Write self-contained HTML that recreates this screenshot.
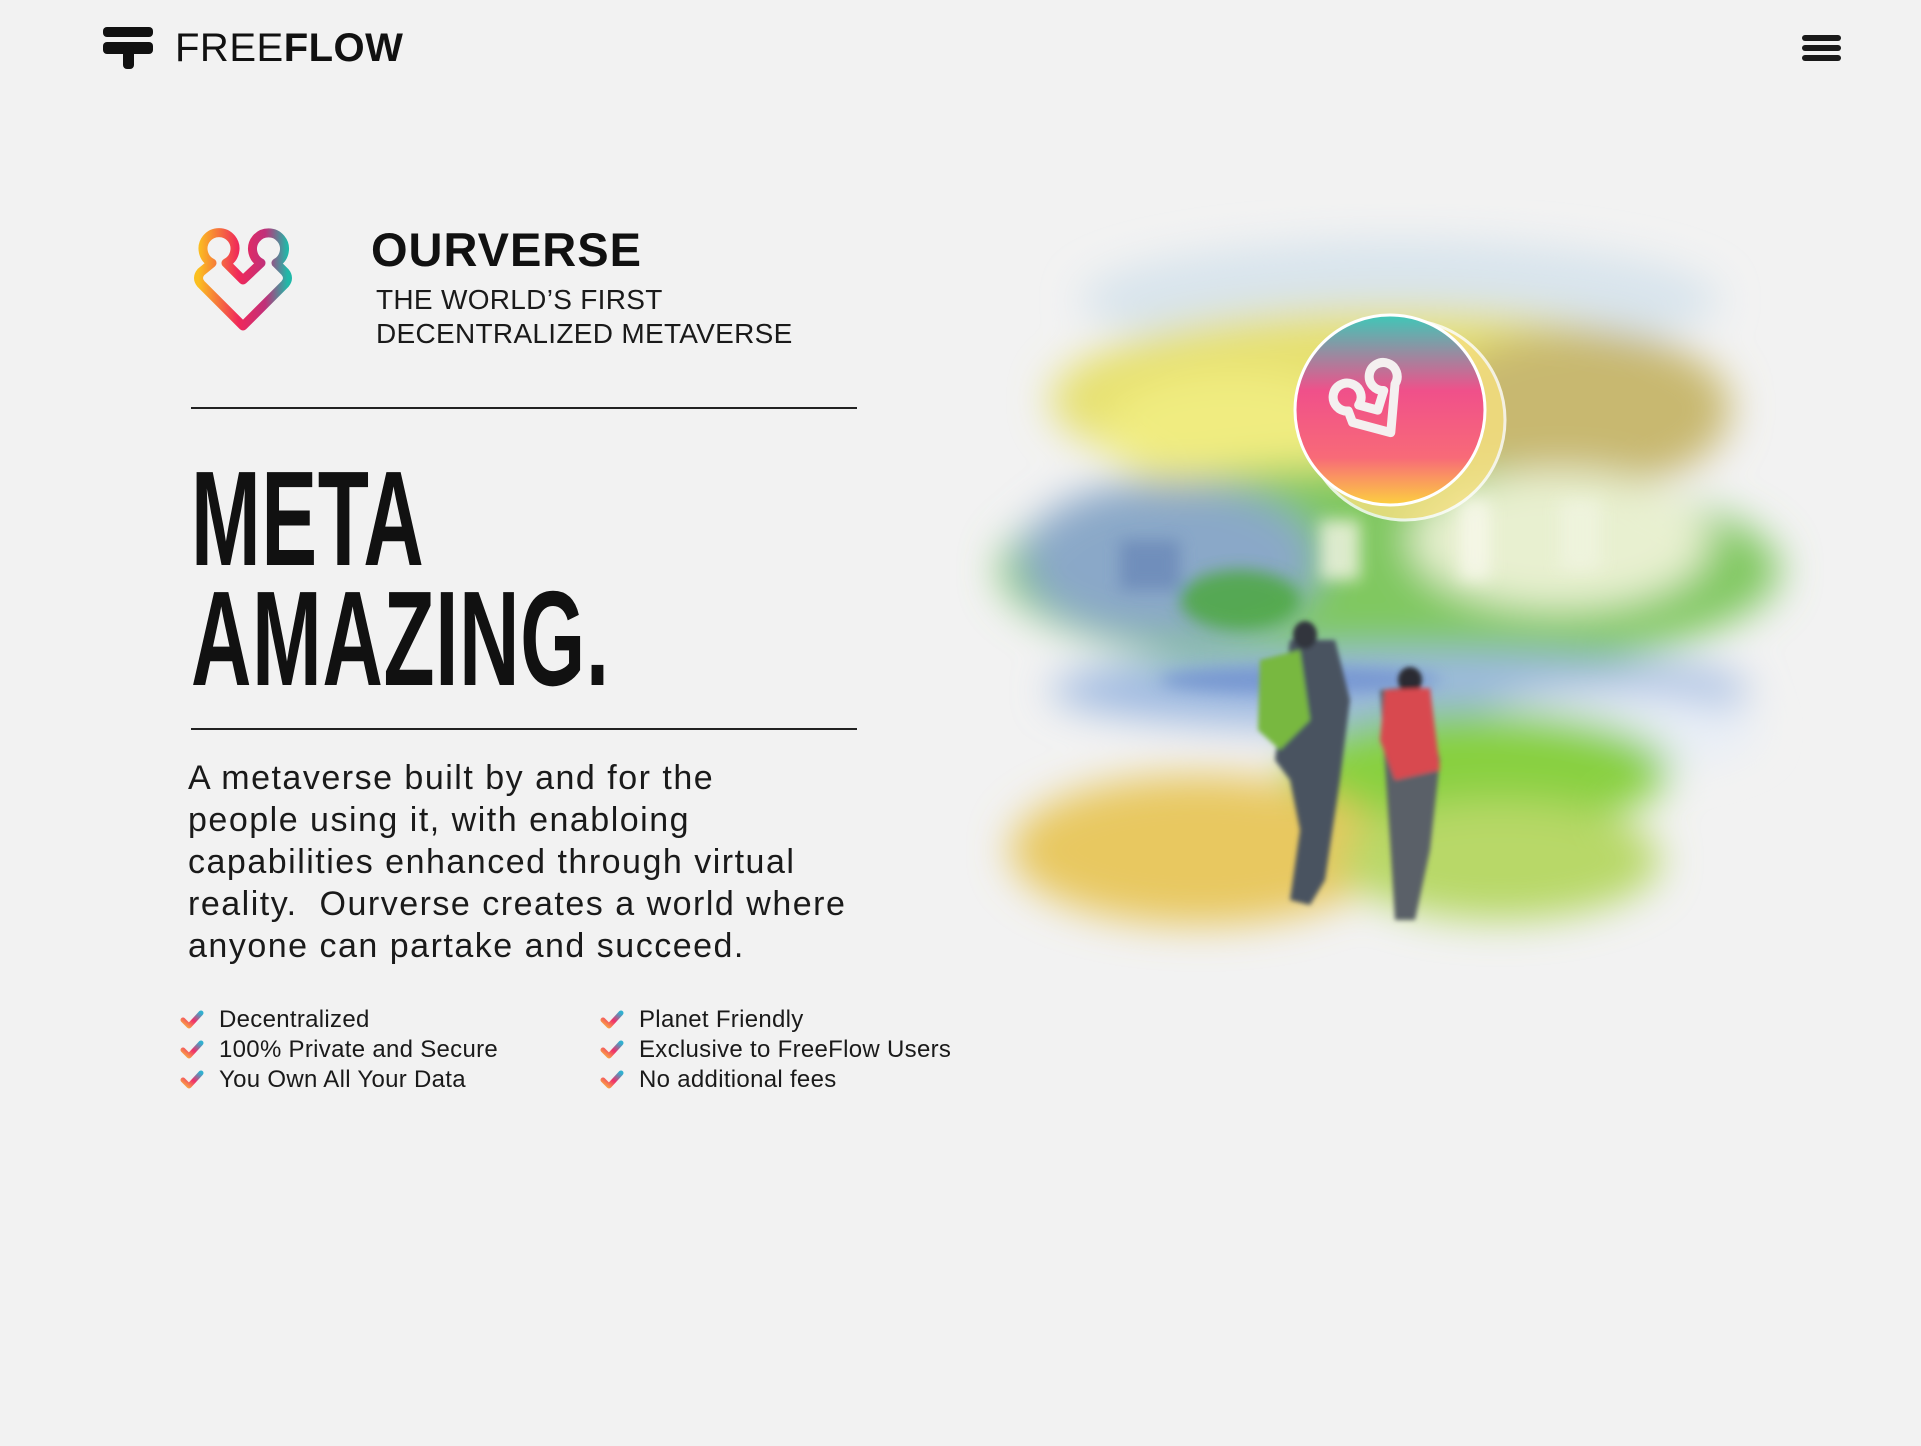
<!DOCTYPE html>
<html><head><meta charset="utf-8"><style>
*{margin:0;padding:0;box-sizing:border-box}
body{width:1921px;height:1446px;background:#f2f2f2;position:relative;overflow:hidden;font-family:"Liberation Sans",sans-serif;color:#111}
.abs{position:absolute}
.brand{left:175px;top:26px;font-size:40px;letter-spacing:.5px;color:#111;white-space:nowrap}
.brand b{font-weight:900}
.ham{left:1802px;width:39px;height:6px;background:#1a1a1a;border-radius:3px}
.ov{left:371px;top:222px;font-size:47px;font-weight:bold;letter-spacing:1px}
.sub{left:376px;font-size:28px;letter-spacing:.3px;white-space:nowrap;color:#1a1a1a}
.line{left:191px;width:666px;height:2px;background:#222}
.big{left:191px;font-family:"Liberation Sans Narrow","Liberation Sans",sans-serif;font-weight:bold;font-size:135px;line-height:1;transform-origin:0 0;transform:scaleX(.62);letter-spacing:1px;white-space:nowrap}
.para{left:188px;top:757px;width:760px;font-size:34px;line-height:42px;color:#1a1a1a;letter-spacing:1.5px;white-space:nowrap}
.li{font-size:24px;color:#1a1a1a;white-space:nowrap;letter-spacing:.3px}
.ck{width:24px;height:20px}
</style></head><body>
<svg class="abs" style="left:102px;top:26px" width="52" height="44" viewBox="0 0 52 44">
<rect x="1" y="1" width="50" height="10" rx="4" fill="#111"/>
<rect x="1" y="16" width="50" height="12" rx="4" fill="#111"/>
<rect x="21" y="20" width="11" height="23" rx="4" fill="#111"/>
</svg>
<div class="abs brand">FREE<b>FLOW</b></div>
<div class="abs ham" style="top:35px"></div>
<div class="abs ham" style="top:45px"></div>
<div class="abs ham" style="top:55px"></div>

<svg class="abs" style="left:186px;top:220px" width="116" height="128" viewBox="0 0 116 128">
<defs><linearGradient id="lg" x1="0" y1="0" x2="1" y2="0"><stop offset="0" stop-color="#fbbf20"/><stop offset=".45" stop-color="#f0285a"/><stop offset=".75" stop-color="#c0307a"/><stop offset="1" stop-color="#20b8a8"/></linearGradient></defs>
<g fill="none" stroke="url(#lg)" stroke-width="9" stroke-linejoin="round">
<path d="M26 43 A16 16 0 1 1 40 43 L57 60 L75 43 A16 16 0 1 1 90 43 L99 52 Q104 58 99 64 L57 106 L15 64 Q10 58 15 52 Z"/>
</g>
</svg>
<div class="abs ov">OURVERSE</div>
<div class="abs sub" style="top:284px">THE WORLD’S FIRST</div>
<div class="abs sub" style="top:318px">DECENTRALIZED METAVERSE</div>
<div class="abs line" style="top:407px"></div>
<div class="abs big" style="top:451px">META</div>
<div class="abs big" style="top:571px">AMAZING.</div>
<div class="abs line" style="top:728px"></div>
<div class="abs para">A metaverse built by and for the<br>people using it, with enabloing<br>capabilities enhanced through virtual<br>reality.&nbsp; Ourverse creates a world where<br>anyone can partake and succeed.</div>

<svg width="0" height="0" style="position:absolute"><defs><linearGradient id="cg" x1="0" y1="1" x2="1" y2="0"><stop offset="0" stop-color="#fbb040"/><stop offset=".5" stop-color="#f0306a"/><stop offset="1" stop-color="#30b0d0"/></linearGradient>
<symbol id="ck" viewBox="0 0 24 20"><path d="M3 10 L9 16 L21 3" fill="none" stroke="url(#cg)" stroke-width="5" stroke-linecap="round" stroke-linejoin="round"/></symbol></defs></svg>

<svg class="abs ck" style="left:180px;top:1010px"><use href="#ck"/></svg><div class="abs li" style="left:219px;top:1006px">Decentralized</div>
<svg class="abs ck" style="left:180px;top:1040px"><use href="#ck"/></svg><div class="abs li" style="left:219px;top:1036px">100% Private and Secure</div>
<svg class="abs ck" style="left:180px;top:1070px"><use href="#ck"/></svg><div class="abs li" style="left:219px;top:1066px">You Own All Your Data</div>
<svg class="abs ck" style="left:600px;top:1010px"><use href="#ck"/></svg><div class="abs li" style="left:639px;top:1006px">Planet Friendly</div>
<svg class="abs ck" style="left:600px;top:1040px"><use href="#ck"/></svg><div class="abs li" style="left:639px;top:1036px">Exclusive to FreeFlow Users</div>
<svg class="abs ck" style="left:600px;top:1070px"><use href="#ck"/></svg><div class="abs li" style="left:639px;top:1066px">No additional fees</div>

<svg class="abs" style="left:950px;top:200px" width="880" height="800" viewBox="950 200 880 800">
<defs>
<filter id="b1" x="-50%" y="-50%" width="200%" height="200%"><feGaussianBlur stdDeviation="20"/></filter>
<filter id="b2" x="-50%" y="-50%" width="200%" height="200%"><feGaussianBlur stdDeviation="8"/></filter>
<filter id="b3"><feGaussianBlur stdDeviation="2.5"/></filter>
<linearGradient id="sg" x1="0" y1="0" x2="0" y2="1"><stop offset="0" stop-color="#3ec8b8"/><stop offset=".4" stop-color="#f0508a"/><stop offset=".75" stop-color="#f86a78"/><stop offset="1" stop-color="#fcd040"/></linearGradient>
</defs>
<g filter="url(#b1)">
<ellipse cx="1400" cy="300" rx="320" ry="60" fill="#c8dcea" opacity=".6"/>
<ellipse cx="1390" cy="400" rx="340" ry="90" fill="#e6e070"/>
<ellipse cx="1580" cy="410" rx="150" ry="80" fill="#c8b870"/>
<ellipse cx="1230" cy="430" rx="130" ry="60" fill="#f0ec80"/>
<ellipse cx="1390" cy="570" rx="390" ry="105" fill="#80c860"/>
<ellipse cx="1170" cy="560" rx="150" ry="80" fill="#8aa8c8"/>
<ellipse cx="1560" cy="540" rx="150" ry="70" fill="#e8f0d0"/>
<ellipse cx="1400" cy="690" rx="350" ry="40" fill="#9cb8e0"/>
<ellipse cx="1610" cy="730" rx="150" ry="40" fill="#e8eef6"/>
<ellipse cx="1480" cy="770" rx="190" ry="60" fill="#88d040"/>
<ellipse cx="1200" cy="850" rx="190" ry="75" fill="#e8c860"/>
<ellipse cx="1500" cy="860" rx="160" ry="60" fill="#b8d868"/>
</g>
<g filter="url(#b2)" opacity=".8">
<rect x="1320" y="520" width="40" height="60" fill="#f4f4e4"/>
<rect x="1460" y="500" width="30" height="80" fill="#f8f8ec"/>
<rect x="1560" y="500" width="40" height="70" fill="#f0f4e0"/>
<rect x="1120" y="540" width="60" height="50" fill="#6a88b8"/>
<ellipse cx="1240" cy="600" rx="60" ry="30" fill="#48a838"/>
<ellipse cx="1300" cy="680" rx="140" ry="14" fill="#7090d0"/>
</g>
<g filter="url(#b3)">
<path d="M1290 640 L1335 640 L1350 700 L1340 780 L1325 880 L1310 905 L1290 900 L1300 830 L1290 780 L1275 760 Z" fill="#4a5260"/>
<ellipse cx="1305" cy="635" rx="12" ry="14" fill="#30343c"/>
<path d="M1260 660 L1300 650 L1310 720 L1280 750 L1258 730 Z" fill="#78b840"/>
<path d="M1380 690 L1420 685 L1440 760 L1430 850 L1415 920 L1395 920 L1390 840 Z" fill="#5a6068"/>
<ellipse cx="1410" cy="680" rx="12" ry="13" fill="#2a2c30"/>
<path d="M1385 690 L1430 688 L1440 770 L1395 780 L1380 740 Z" fill="#d84850"/>
</g>
<circle cx="1405" cy="420" r="100" fill="#f6e080" opacity=".8" stroke="#fff" stroke-width="3"/>
<circle cx="1390" cy="410" r="95" fill="url(#sg)" stroke="#fff" stroke-width="3"/>
<g fill="none" stroke="#f4f0f0" stroke-width="9" stroke-linejoin="round" transform="rotate(-30 1380 410)">
<path d="M1352 395 A14 14 0 1 1 1364 395 L1378 409 L1393 395 A14 14 0 1 1 1406 395 L1378 435 L1350 407 Z"/>
</g>
</svg>
</body></html>
